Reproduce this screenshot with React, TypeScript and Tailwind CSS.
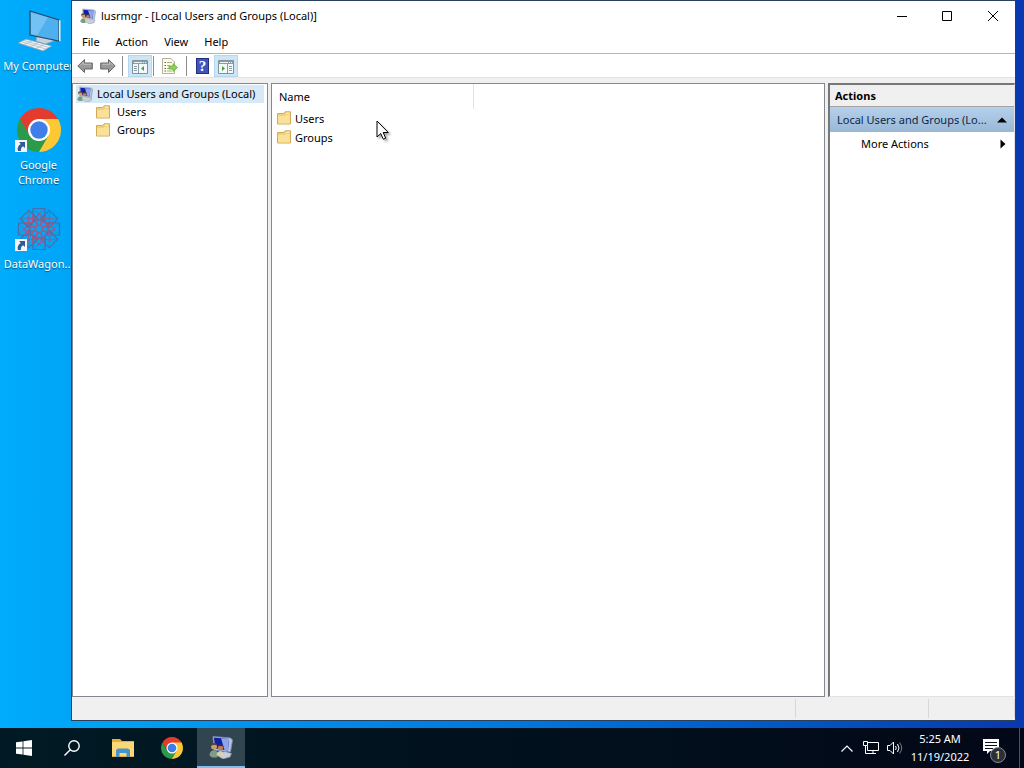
import React, { useState } from 'react';

const menus = ['File', 'Action', 'View', 'Help'];
const folders = ['Users', 'Groups'];

interface IconProps {
	className?: string;
}

function ChromeIcon({ className }: IconProps) {
	return (
		<svg viewBox="0 0 44 44" className={className} aria-hidden="true">
			<path d="M22 22 L2.95 11 A22 22 0 0 1 41.05 11 Z" fill="#e33b2e" />
			<path d="M22 22 L41.05 11 A22 22 0 0 1 22 44 Z" fill="#fcc934" />
			<path d="M22 11 H41.05 L31.5 27.5 Z" fill="#fcc934" />
			<path d="M2.95 11 L12.5 27.5 L22 11 Z" fill="#e33b2e" />
			<path d="M2.95 11 L12.5 27.5 L22 33 L31.5 27.5 L22 44 A22 22 0 0 1 2.95 11 Z" fill="#2c9a48" />
			<circle cx="22" cy="22" r="11" fill="#fff" />
			<circle cx="22" cy="22" r="8.7" fill="#3f7de8" />
		</svg>
	);
}

function ComputerIcon({ className }: IconProps) {
	return (
		<svg viewBox="0 0 44 44" className={className} aria-hidden="true">
			<path d="M20 27 L32 29 L37 32 L28 35 L19 32 Z" fill="#c3d3df" stroke="#8aa5b8" strokeWidth=".7" />
			<path d="M13 2 L42 11 V32 L13 26 Z" fill="#4fb0ee" stroke="#284a66" strokeWidth="1.2" />
			<path d="M14 3.5 L31 8.500 L20 26.500 L14 25 Z" fill="#8dcff7" opacity=".6" />
			<path d="M42 11 L43.500 11.500 V32.500 L42 32 Z" fill="#e3eef5" />
			<path d="M9 30 L35 37 L26 42 L1 34 Z" fill="#eef2f5" stroke="#7d99ab" strokeWidth=".8" />
			<path d="M7 31.5 L32 38.5 M5 33 L29 40 M15 32 L7 35.5 M21 34 L13 38 M27 35.5 L19 39.5" stroke="#a4b8c5" strokeWidth=".7" />
		</svg>
	);
}

function DataWagonIcon({ className }: IconProps) {
	const angles = [0, 45, 90, 135, 180, 225, 270, 315];
	return (
		<svg viewBox="0 0 44 44" className={className} fill="none" strokeWidth="1.2" aria-hidden="true">
			{angles.map(a => (
				<g key={a} transform={`rotate(${a} 22 22)`}>
					<path d="M16 1.500 H28 V13 H16 Z" stroke="#3f70ae" />
					<path d="M16 1.500 L28 13 M28 1.500 L16 13" stroke="#5573b0" strokeWidth=".8" />
					<path d="M16 7 L22 13 L28 7 M17 14 L22 6 L27 14 L22 19 Z" stroke="#a25884" />
				</g>
			))}
		</svg>
	);
}

function ShortcutBadge() {
	return (
		<svg viewBox="0 0 12 12" className="absolute bottom-0 -left-0.5 h-3 w-3" aria-hidden="true">
			<path d="M0 0 H12 V12 H0 Z" fill="#f3f6f9" />
			<path d="M4 2 H10 V8 L8 6.2 C6 7.5 5.6 9 6 11 H3 C2 8 3.2 5.5 5.8 4 Z" fill="#2d5c98" />
		</svg>
	);
}

function UsersIcon({ className }: IconProps) {
	return (
		<svg viewBox="0 0 24 24" className={className} aria-hidden="true">
			<path d="M4 1.500 L21.500 3 L23.500 5 L21.500 17 L5 15 Z" fill="#b4c4de" stroke="#7e8eaa" strokeWidth=".8" />
			<path d="M5 2.500 L20 4 L19 15.500 L6 13.500 Z" fill="#101da8" />
			<path d="M12 3.200 L20 4 L19 15.500 L15.500 15 Z" fill="#8ea4e6" />
			<path d="M11 18 L16 16.500 L22.500 18.500 L21 22 L14 24 L9 21 Z" fill="#c6d0dd" stroke="#8390a4" strokeWidth=".7" />
			<circle cx="5" cy="11.500" r="3" fill="#c99f6e" />
			<path d="M1.500 11.500 C1.500 7 8.500 7 8.500 11 L7 10 H4 Z" fill="#54452b" />
			<path d="M.5 20.500 C.5 14 8 13.500 9.500 19 L8 22.500 H3 Z" fill="#7f9c88" />
			<circle cx="11.500" cy="12.500" r="2.800" fill="#b77f5e" />
			<path d="M8.500 12.500 C8.500 8.500 14.500 8.500 14.500 12.500 L13 11 H10 Z" fill="#43281b" />
			<path d="M7.500 20 C8 15 14.500 14.500 15 20 L12 22 Z" fill="#d5cfb6" />
		</svg>
	);
}

function FolderIcon() {
	return (
		<svg viewBox="0 0 14 14" className="-mt-px h-3.5 w-3.5 shrink-0" aria-hidden="true">
			<path d="M.5 2.5 H6.500 L8 .8 H13.5 V13 H.5 Z" fill="#f0d07a" stroke="#cfab55" />
			<path d="M1 5 H7.500 L9 4 H13 V12.500 H1 Z" fill="#fae19a" />
			<path d="M9 2.200 H12.5" stroke="#fff6da" />
		</svg>
	);
}

function ArrowIcon({ className }: IconProps) {
	return (
		<svg viewBox="0 0 16 16" className={className} aria-hidden="true">
			<path d="M.8 8 L7.5 1.5 V5 H15.3 V11 H7.5 V14.5 Z" fill="#999" stroke="#666" strokeLinejoin="round" />
			<path d="M3 7.5 L6.5 4 V6.3 H14" fill="none" stroke="#bdbdbd" />
		</svg>
	);
}

function PaneIcon({ side }: { side: 'left' | 'right' }) {
	return (
		<svg viewBox="0 0 16 14" className="mt-0.5 h-3.5 w-4" aria-hidden="true">
			<path d="M.5 .5 H15.5 V13.5 H.5 Z" fill="#f4f8fa" stroke="#84939b" />
			<path d="M1 1 H15 V4 H1 Z" fill="#8e9ca4" />
			<path d="M2 2.5 H10 M11 2.5 H12 M13 2.5 H14" stroke="#eef3f6" />
			{side === 'left' ? (
				<>
					<path d="M6.5 4 V13 M2 6.5 H5 M2 8.5 H5 M2 10.5 H5" stroke="#8a9ba5" />
					<path d="M12 6 V11 L9 8.5 Z" fill="#46a336" />
				</>
			) : (
				<>
					<path d="M9.5 4 V13 M11 6.5 H14 M11 8.5 H14 M11 10.5 H14" stroke="#8a9ba5" />
					<path d="M4 6 V11 L7 8.5 Z" fill="#46a336" />
				</>
			)}
		</svg>
	);
}

function ExportIcon() {
	return (
		<svg viewBox="0 0 16 16" className="h-4 w-4" aria-hidden="true">
			<path d="M.5 .5 H9 L12.5 4 V15.5 H.5 Z" fill="#fffdea" stroke="#b3b29c" />
			<path d="M2.5 4.5 H4 M2.5 7.5 H4 M2.5 10.5 H4 M2.5 13 H4" stroke="#5c5c4c" />
			<path d="M5 4.5 H10 M5 7.5 H8 M5 10.5 H7 M5 13 H10" stroke="#a9a993" />
			<path d="M7 8 H11 V5.5 L15.5 9.5 L11 13.5 V11 H7 Z" fill="#8ed050" stroke="#68b03c" strokeWidth=".8" />
		</svg>
	);
}

function HelpIcon() {
	return (
		<span className="flex h-4 w-[13px] items-center justify-center border border-[#20307f] bg-[#3f55bd] font-['Liberation_Serif',serif] text-[15px] leading-4 font-bold text-white">?</span>
	);
}

function Separator() {
	return <span className="h-5 w-px bg-[#8d8d8d]" />;
}

function DesktopIcon({ label, shortcut, children }: { label: string; shortcut?: boolean; children: React.ReactNode }) {
	return (
		<button type="button" className="flex w-[77px] flex-col items-center text-center text-white">
			<span className="relative">
				{children}
				{shortcut && <ShortcutBadge />}
			</span>
			<span className="mt-[5px] w-[74px] leading-[15px] [text-shadow:0_1px_1px_rgba(0,0,0,0.5)]">{label}</span>
		</button>
	);
}

function Desktop() {
	return (
		<div className="w-[71px] shrink-0 overflow-hidden">
			<div className="flex w-[77px] flex-col pt-[9px]">
				<div className="h-[99px] whitespace-nowrap">
					<DesktopIcon label="My Computer"><ComputerIcon className="h-11 w-11" /></DesktopIcon>
				</div>
				<div className="h-[99px]">
					<DesktopIcon label="Google Chrome" shortcut><ChromeIcon className="h-11 w-11" /></DesktopIcon>
				</div>
				<div className="h-[99px] whitespace-nowrap">
					<DesktopIcon label="DataWagon..." shortcut><DataWagonIcon className="h-11 w-11" /></DesktopIcon>
				</div>
			</div>
		</div>
	);
}

function TitleBar() {
	return (
		<header className="flex h-[29px] shrink-0 items-center bg-white pl-2">
			<UsersIcon className="h-4 w-4" />
			<h1 className="ml-[5px] flex-1">lusrmgr - [Local Users and Groups (Local)]</h1>
			<button type="button" aria-label="Minimize" className="flex h-full w-[45px] items-center justify-center">
				<svg viewBox="0 0 10 10" className="h-2.5 w-2.5"><path d="M0 5.5 H10" stroke="#000" /></svg>
			</button>
			<button type="button" aria-label="Maximize" className="flex h-full w-[46px] items-center justify-center">
				<svg viewBox="0 0 10 10" className="h-2.5 w-2.5"><path d="M.5 .5 H9.5 V9.5 H.5 Z" fill="none" stroke="#000" /></svg>
			</button>
			<button type="button" aria-label="Close" className="flex h-full w-[45px] items-center justify-center">
				<svg viewBox="0 0 10 10" className="h-2.5 w-2.5"><path d="M0 0 L10 10 M10 0 L0 10" stroke="#000" /></svg>
			</button>
		</header>
	);
}

function Toolbar() {
	return (
		<div className="flex h-6 shrink-0 items-center border-b border-[#e3e3e3] bg-white pl-[5px]">
			<button type="button" aria-label="Back"><ArrowIcon className="h-4 w-4" /></button>
			<button type="button" aria-label="Forward" className="mr-1.5 ml-[7px]"><ArrowIcon className="h-4 w-4 -scale-x-100" /></button>
			<Separator />
			<button type="button" aria-label="Show/Hide Console Tree" className="mr-px ml-[5px] flex h-[22px] w-6 items-center justify-center border border-[#b5d8f1] bg-[#cde6f7]">
				<PaneIcon side="left" />
			</button>
			<Separator />
			<button type="button" aria-label="Export List" className="mx-2"><ExportIcon /></button>
			<Separator />
			<button type="button" aria-label="Help" className="ml-[9px]"><HelpIcon /></button>
			<button type="button" aria-label="Show/Hide Action Pane" className="ml-[5px] flex h-[22px] w-6 items-center justify-center border border-[#b5d8f1] bg-[#cde6f7]">
				<PaneIcon side="right" />
			</button>
		</div>
	);
}

function ConsoleTree() {
	return (
		<nav className="w-[196px] shrink-0 border border-[#828790] bg-white px-[3px] pt-px">
			<button type="button" className="flex h-[18px] w-full items-center gap-1 bg-[#d5e9f9] text-left whitespace-nowrap">
				<UsersIcon className="ml-px h-4 w-4 shrink-0" />
				Local Users and Groups (Local)
			</button>
			<ul>
				{folders.map(name => (
					<li key={name}>
						<button type="button" className="flex h-[18px] items-center gap-[7px] pl-5">
							<FolderIcon />
							{name}
						</button>
					</li>
				))}
			</ul>
		</nav>
	);
}

function ResultList() {
	return (
		<main className="relative min-w-0 flex-1 border border-[#828790] bg-white">
			<table className="w-full table-fixed border-collapse text-left">
				<thead>
					<tr className="h-[25px]">
						<th scope="col" className="w-[201px] border-r border-[#e2e2e2] pl-[7px] font-normal">Name</th>
						<th aria-hidden="true" />
					</tr>
				</thead>
				<tbody>
					{folders.map(name => (
						<tr key={name} className="h-[19px]">
							<td className="p-0 pl-[5px]">
								<span className="flex items-center gap-1"><FolderIcon />{name}</span>
							</td>
							<td />
						</tr>
					))}
				</tbody>
			</table>
			<svg viewBox="0 0 14 21" className="absolute top-9 left-[104px] h-[21px] w-3.5 drop-shadow-[2px_2px_1px_rgba(0,0,0,0.35)]" aria-hidden="true">
				<path d="M1 1 V17 L4.7 13.5 L7.3 19.2 L9.7 18.2 L7.2 12.5 H12.3 Z" fill="#fff" stroke="#000" />
			</svg>
		</main>
	);
}

function ActionsPane() {
	const [open, setOpen] = useState(true);

	return (
		<aside className="w-[187px] shrink-0 border-t-2 border-r border-b border-l-2 border-t-[#777] border-r-[#e3e3e3] border-b-[#e3e3e3] border-l-[#777] bg-white">
			<h2 className="flex h-[22px] items-center border-b border-[#a5a5a5] bg-[#f0f0f0] pl-[5px] font-bold">Actions</h2>
			<button
				type="button"
				onClick={() => setOpen(!open)}
				className="flex h-[25px] w-full items-center justify-between bg-linear-to-b from-[#b5d0ec] to-[#99b8d5] pr-[7px] pl-[7px] whitespace-nowrap text-[#0b2748]"
			>
				Local Users and Groups (Lo...
				<svg viewBox="0 0 10 6" className="h-1.5 w-2.5" aria-hidden="true"><path d="M0 5.500 L5 .5 L10 5.500 Z" fill="#000" /></svg>
			</button>
			{open && (
				<button type="button" className="flex h-6 w-full items-center justify-between pr-2 pl-[31px]">
					More Actions
					<svg viewBox="0 0 6 10" className="h-2.5 w-1.5" aria-hidden="true"><path d="M.5 .5 L5.500 5 L.5 9.500 Z" fill="#000" /></svg>
				</button>
			)}
		</aside>
	);
}

function StatusBar() {
	return (
		<footer className="flex h-[23px] shrink-0 bg-[#f0f0f0] py-0.5">
			<span className="flex-1 border-r border-[#d7d7d7]" />
			<span className="w-[133px] border-r border-[#d7d7d7]" />
			<span className="w-[86px] border-r border-[#d7d7d7]" />
		</footer>
	);
}

function Taskbar() {
	return (
		<div className="flex h-10 shrink-0 items-stretch bg-linear-to-r from-[#001a24] to-[#020817] text-white">
			<button type="button" aria-label="Start" className="flex w-12 items-center justify-center">
				<svg viewBox="0 0 16 16" className="h-4 w-4" fill="#fff"><path d="M0 2.3 L6.6 1.4 V7.6 H0 Z M7.4 1.3 L16 0 V7.6 H7.4 Z M0 8.4 H6.6 V14.6 L0 13.7 Z M7.4 8.4 H16 V16 L7.4 14.7 Z" /></svg>
			</button>
			<button type="button" aria-label="Search" className="flex w-12 items-center justify-center">
				<svg viewBox="0 0 16 16" className="h-4 w-4" fill="none" stroke="#fff" strokeWidth="1.4"><circle cx="10" cy="6" r="5.2" /><path d="M6.3 9.7 L.5 15.5" /></svg>
			</button>
			<button type="button" aria-label="File Explorer" className="ml-0.5 flex w-[50px] items-center justify-center">
				<svg viewBox="0 0 22 18" className="h-[18px] w-[22px]">
					<path d="M0 0 H8 L10 2 H22 V18 H0 Z" fill="#e8ae3c" />
					<path d="M0 3 H22 V17 H0 Z" fill="#fcd775" />
					<path d="M4 18 V11 L6 9.500 H16 L18 11 V18 H14.5 V14 H7.5 V18 Z" fill="#4595c9" />
				</svg>
			</button>
			<button type="button" aria-label="Google Chrome" className="flex w-12 items-center justify-center"><ChromeIcon className="h-[22px] w-[22px]" /></button>
			<button type="button" aria-label="lusrmgr" className="ml-px flex w-12 items-center justify-center border-b-2 border-[#80bfee] bg-[#30454f]"><UsersIcon className="h-6 w-6" /></button>
			<div className="ml-auto flex items-center">
				<button type="button" aria-label="Show hidden icons">
					<svg viewBox="0 0 12 7" className="h-[7px] w-3" fill="none" stroke="#fff" strokeWidth="1.2"><path d="M.5 6.5 L6 1 L11.5 6.5" /></svg>
				</button>
				<button type="button" aria-label="Network" className="ml-2.5">
					<svg viewBox="0 0 16 14" className="h-3.5 w-4" fill="none" stroke="#fff"><path d="M5 1.5 H15.5 V9.5 H4.5 V5 M10 9.5 V12.5 M6 12.5 H13 M.5 .5 H4.5 V4.5 H.5 Z M2.5 4.5 V12.5 H6" /></svg>
				</button>
				<button type="button" aria-label="Volume" className="ml-2">
					<svg viewBox="0 0 16 14" className="h-3.5 w-4" fill="none" stroke="#fff"><path d="M.5 4.5 H3 L6.5 1 V13 L3 9.5 H.5 Z M8.5 5 Q10 7 8.5 9 M10.5 3 Q13.5 7 10.5 11" /><path d="M12.5 1.5 Q17 7 12.5 12.5" stroke="#777f87" /></svg>
				</button>
				<div className="ml-1.5 w-[62px] text-center leading-[18px] whitespace-nowrap">
					<p>5:25 AM</p>
					<p>11/19/2022</p>
				</div>
				<button type="button" aria-label="Notifications" className="relative mr-3 ml-2 h-6 w-7">
					<svg viewBox="0 0 28 24" className="h-6 w-7"><path d="M4 3 H20 V15 H11 L8 18 V15 H4 Z" fill="#fff" /><path d="M6 6.5 H18 M6 9.5 H18 M6 12.5 H14" stroke="#07101c" /></svg>
					<span className="absolute right-px -bottom-[3px] flex h-4 w-4 items-center justify-center rounded-full border border-[#858b91] bg-[#2b3036]">1</span>
				</button>
				<span className="mr-1 h-10 w-px bg-[#4b535c]" />
			</div>
		</div>
	);
}

export default function App() {
	return (
		<div className="flex h-screen min-h-96 flex-col overflow-hidden bg-[#00acfc] font-['Noto_Sans',sans-serif] text-[11px] leading-4 text-black">
			<div className="flex min-h-0 flex-1 bg-linear-to-r from-[#00acfc] via-[#0078dc] to-[#0a38b0] pr-2 pb-[7px]">
				<Desktop />
				<div className="flex min-w-0 flex-1 flex-col border border-[#29405c] bg-[#f0f0f0]">
					<TitleBar />
					<div className="flex h-6 shrink-0 items-center gap-4 border-b border-[#b5b5b5] bg-white pl-2.5">
						{menus.map(m => <button key={m} type="button">{m}</button>)}
					</div>
					<Toolbar />
					<div className="flex min-h-0 flex-1 gap-[3px] pt-[5px]">
						<ConsoleTree />
						<ResultList />
						<ActionsPane />
					</div>
					<StatusBar />
				</div>
			</div>
			<Taskbar />
		</div>
	);
}
